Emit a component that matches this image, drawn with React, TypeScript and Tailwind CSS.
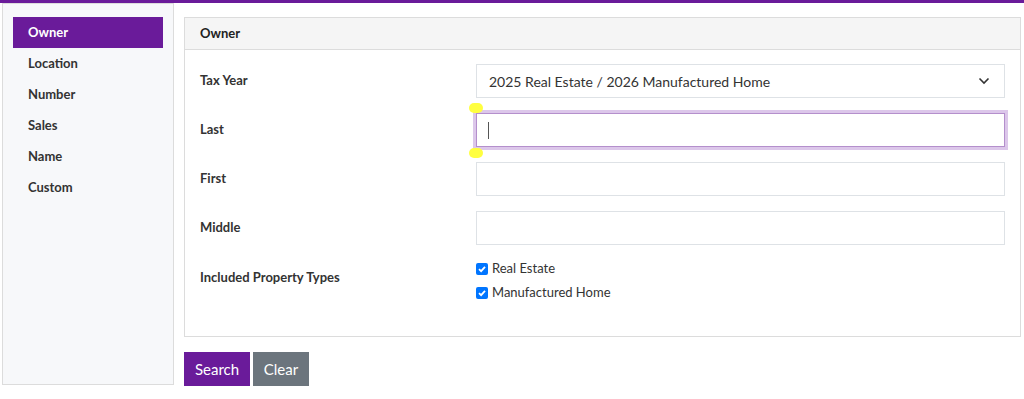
import React from "react";

const font = { fontFamily: 'Lato, "Open Sans", sans-serif' };

function Row({ label, children }: { label: string; children: React.ReactNode }) {
  return (
    <div className="flex items-center">
      <div className="w-[276px] shrink-0 text-[13px] font-bold text-[#333]">{label}</div>
      <div className="flex-1">{children}</div>
    </div>
  );
}

function Check({ label }: { label: string }) {
  return (
    <label className="flex items-center h-[24px] text-[13px] text-[#333]">
      <span className="w-[12px] h-[12px] rounded-[2px] bg-[#0075ff] flex items-center justify-center mr-[4px]">
        <svg width="10" height="10" viewBox="0 0 10 10">
          <path d="M2 5.2 L4.1 7.2 L8 2.8" stroke="white" strokeWidth="1.8" fill="none" />
        </svg>
      </span>
      {label}
    </label>
  );
}

export default function App() {
  const nav = ["Owner", "Location", "Number", "Sales", "Name", "Custom"];
  return (
    <div className="w-[1024px] h-[399px] bg-white overflow-hidden" style={font}>
      <div className="h-[3px] bg-[#6a1b9a]" />
      <div className="flex pl-[2px] pr-[3px]">
        <div className="w-[172px] h-[382px] bg-[#f7f8fa] border border-[#dcdcdc] pt-[13px] pl-[10px] pr-[10px]">
          {nav.map((n, i) => (
            <div
              key={n}
              className={`h-[31px] pl-[15px] pt-[1px] flex items-center text-[13px] font-bold ${i === 0 ? "bg-[#6a1b9a] text-white" : "text-[#333]"}`}
            >
              {n}
            </div>
          ))}
        </div>
        <div className="flex-1 ml-[10px] pt-[14px]">
          <div className="border border-[#dcdcdc] h-[320px]">
            <div className="h-[32px] bg-[#f5f5f5] border-b border-[#dcdcdc] pl-[15px] flex items-center text-[13px] font-bold text-[#222]">
              Owner
            </div>
            <div className="pl-[15px] pr-[15px] pt-[14px] flex flex-col">
              <Row label="Tax Year">
                <div className="h-[34px] border border-[#dee2e6] flex items-center justify-between pl-[12px] pr-[14px] text-[14px] text-[#333]">
                  <span>2025 Real Estate / 2026 Manufactured Home</span>
                  <svg width="12" height="8" viewBox="0 0 12 8">
                    <path d="M1.5 1.5 L6 6 L10.5 1.5" stroke="#333" strokeWidth="1.6" fill="none" />
                  </svg>
                </div>
              </Row>
              <div className="mt-[15px]">
                <Row label="Last">
                  <div className="relative">
                    <div className="h-[34px] border border-[#b48fcc] ring-[3px] ring-[#dcc7ea] flex items-center pl-[11px]">
                      <span className="w-[1px] h-[17px] bg-[#555]" />
                    </div>
                    <span className="absolute left-[-7px] top-[-10px] w-[14px] h-[10px] rounded-full bg-[#ffff40]" />
                    <span className="absolute left-[-7px] bottom-[-11px] w-[14px] h-[10px] rounded-full bg-[#ffff40]" />
                  </div>
                </Row>
              </div>
              <div className="mt-[15px]">
                <Row label="First">
                  <div className="h-[34px] border border-[#dee2e6]" />
                </Row>
              </div>
              <div className="mt-[15px]">
                <Row label="Middle">
                  <div className="h-[34px] border border-[#dee2e6]" />
                </Row>
              </div>
              <div className="flex items-start mt-[12px]">
                <div className="w-[276px] shrink-0 text-[13px] font-bold text-[#333] pt-[11px]">Included Property Types</div>
                <div className="flex flex-col">
                  <Check label="Real Estate" />
                  <Check label="Manufactured Home" />
                </div>
              </div>
            </div>
          </div>
          <div className="flex gap-[3px] mt-[15px]">
            <button className="h-[34px] w-[66px] bg-[#6a1b9a] text-white text-[15px]">Search</button>
            <button className="h-[34px] w-[56px] bg-[#6c757d] text-white text-[15px]">Clear</button>
          </div>
        </div>
      </div>
    </div>
  );
}
